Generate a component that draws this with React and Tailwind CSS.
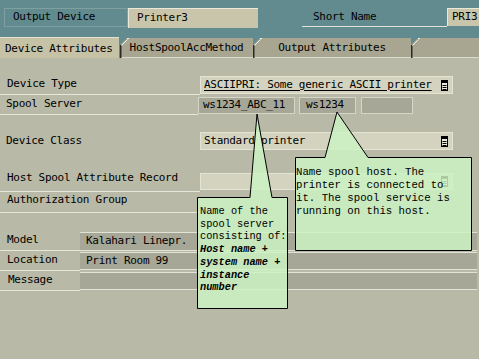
import React from "react";

// small list/dropdown glyph used at the right end of selectable fields
const ListIcon = () => (
  <svg width="7" height="11" viewBox="0 0 7 11" className="shrink-0">
    <rect x="0.5" y="0.5" width="6" height="10" fill="#ecece0" stroke="#000" />
    <rect x="0" y="0" width="7" height="3" fill="#000" />
    <path d="M1.5 5.5h4M1.5 7.5h4M1.5 9.5h4" stroke="#000" />
  </svg>
);

const Tab = ({ label, w }) => (
  <div
    className={`relative mt-[1px] h-[20px] ${w} bg-[#a8a690] border-b border-[#dcdccc] flex items-center justify-center [clip-path:polygon(7px_0,100%_0,100%_100%,0_100%,0_7px)]`}
  >
    <svg width="9" height="20" className="absolute left-0 top-0">
      <path d="M0.5 7V20" stroke="#2a2a2a" strokeWidth="2" />
      <path d="M1.5 7.5L7.5 1.5" stroke="#f0f0e8" />
      <path d="M7 0.5H9" stroke="#f0f0e8" />
    </svg>
    <span className="pt-[1px]">{label}</span>
  </div>
);

const App = () => {
  return (
    <div className="relative w-[479px] h-[359px] overflow-hidden bg-[#b8b9a7] text-black text-[11px] tracking-[-0.3px] font-['DejaVu_Sans_Mono','Liberation_Mono',monospace]">
      {/* header */}
      <div className="h-[37px] bg-[#628b90] flex items-start pt-[8px]">
        <div className="ml-[4px] w-[124px] h-[19px] border border-[#7f9fa0] pl-[8px] flex items-center">
          Output Device
        </div>
        <div className="w-[130px] h-[20px] bg-[#c9c5aa] border-t border-l border-[#eae8da] pl-[8px] flex items-center">
          Printer3
        </div>
        <div className="ml-[44px] w-[145px] h-[19px] border-b border-[#e2e2da] pl-[11px] flex items-center">
          Short Name
        </div>
        <div className="flex-1 h-[18px] bg-[#c9c5aa] border-t border-l border-[#eae8da] pl-[4px] flex items-center">
          PRI3
        </div>
      </div>

      {/* tabs */}
      <div className="flex h-[21px] bg-[#628b90]">
        <div className="w-[119px] h-[21px] bg-[#c6c2a6] border-t border-[#e6e2d0] pl-[5px] flex items-end pb-[1px]">
          Device Attributes
        </div>
        <div className="w-[1px]" />
        <Tab label="HostSpoolAccMethod" w="w-[133px]" />
        <Tab label="Output Attributes" w="w-[158px]" />
        <Tab label="" w="flex-1" />
      </div>

      {/* form rows */}
      <div className="pt-[18px]">
        <div className="flex h-[19px]">
          <div className="w-[200px] border-b border-[#e6e6da] pl-[7px] flex items-center pb-[2px]">Device Type</div>
          <div className="w-[253px] h-[18px] bg-[#d3d3bf] border border-[#e4e4d4] pl-[3px] pr-[4px] flex items-center justify-between">
            <span className="underline underline-offset-2">ASCIIPRI: Some generic ASCII printer</span>
            <ListIcon />
          </div>
        </div>

        <div className="flex h-[19px] mt-[1px]">
          <div className="w-[198px] border-b border-[#e6e6da] pl-[6px] flex items-center pb-[2px]">Spool Server</div>
          <div className="flex gap-[4px] mt-[1px]">
            <div className="w-[97px] h-[17px] bg-[#a7a797] border border-[#d6d6c6] pl-[4px] flex items-center">ws1234_ABC_11</div>
            <div className="w-[57px] h-[17px] bg-[#a7a797] border border-[#d6d6c6] pl-[6px] flex items-center">ws1234</div>
            <div className="w-[52px] h-[17px] ml-[1px] bg-[#a7a797] border border-[#d6d6c6]" />
          </div>
        </div>

        <div className="flex h-[19px] mt-[17px]">
          <div className="w-[200px] pl-[6px] flex items-center pb-[1px]">Device Class</div>
          <div className="w-[253px] h-[18px] bg-[#d3d3bf] border border-[#e4e4d4] pl-[3px] pr-[4px] flex items-center justify-between">
            <span>Standard printer</span>
            <ListIcon />
          </div>
        </div>

        <div className="flex h-[23px] mt-[18px]">
          <div className="w-[200px] border-b border-[#e6e6da] pl-[7px] pt-[1px]">Host Spool Attribute Record</div>
          <div className="w-[253px] h-[17px] mt-[4px] bg-[#d3d3bf] border border-[#e4e4d4] pr-[4px] flex items-center justify-end">
            <ListIcon />
          </div>
        </div>

        <div className="flex h-[21px]">
          <div className="w-[200px] border-b border-[#e6e6da] pl-[7px] flex items-end pb-[4px]">Authorization Group</div>
        </div>

        <div className="flex h-[19px] mt-[19px] pr-[2px]">
          <div className="w-[80px] border-b border-[#e6e6da] pl-[7px] flex items-center pb-[2px]">Model</div>
          <div className="flex-1 h-[19px] bg-[#a7a797] border-t border-b border-[#e2e2d6] pl-[6px] flex items-center">Kalahari Linepr.</div>
        </div>

        <div className="flex h-[20px] pr-[2px]">
          <div className="w-[80px] border-b border-[#e6e6da] pl-[7px] flex items-center">Location</div>
          <div className="flex-1 h-[18px] mt-[1px] bg-[#a7a797] border-t border-b border-[#e2e2d6] pl-[6px] flex items-center">Print Room 99</div>
        </div>

        <div className="flex h-[20px] pr-[2px]">
          <div className="w-[80px] border-b border-[#e6e6da] pl-[8px] flex items-center">Message</div>
          <div className="flex-1 h-[18px] mt-[1px] bg-[#a7a797] border-t border-b border-[#e2e2d6]" />
        </div>
      </div>

      {/* help callouts lying over the form */}
      <svg width="479" height="359" className="absolute left-0 top-0 pointer-events-none">
        <path
          d="M197.5 197.5H250L257 114L272 197.5H287.5V308.5H197.5Z"
          fill="rgba(204,242,194,0.84)"
          stroke="#000"
        />
        <path
          d="M295.5 157.5H325L337 112L368 157.5H471.5V250.5H295.5Z"
          fill="rgba(204,242,194,0.84)"
          stroke="#000"
        />
      </svg>

      <div className="absolute left-[200px] top-[205px] w-[87px] whitespace-nowrap tracking-normal text-[10.3px] leading-[12.7px] font-['Liberation_Mono','Courier_New',monospace]">
        <div>Name of the</div>
        <div>spool server</div>
        <div>consisting of:</div>
        <div className="font-bold italic">Host name +</div>
        <div className="font-bold italic">system name +</div>
        <div className="font-bold italic">instance</div>
        <div className="font-bold italic">number</div>
      </div>

      <div className="absolute left-[296px] top-[165.5px] w-[175px] whitespace-nowrap tracking-normal text-[10.7px] leading-[13px] font-['Liberation_Mono','Courier_New',monospace]">
        <div>Name spool host. The</div>
        <div>printer is connected to</div>
        <div>it. The spool service is</div>
        <div>running on this host.</div>
      </div>
    </div>
  );
};

export default App;
